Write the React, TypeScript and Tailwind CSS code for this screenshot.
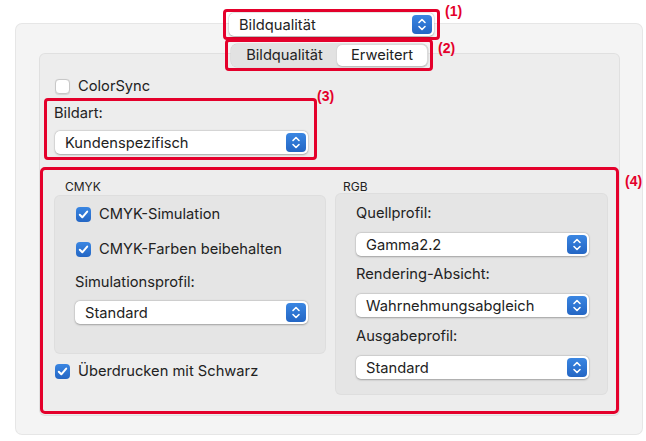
import React from "react";

const RED = "border-[#e4002b]";

function Stepper() {
  return (
    <div className="w-[20px] h-[19px] rounded-[4px] bg-gradient-to-b from-[#3a86e2] to-[#2466c4] flex items-center justify-center shrink-0">
      <svg width="20" height="19" viewBox="0 0 20 19">
        <path d="M7 7.5 L10 4.5 L13 7.5" fill="none" stroke="white" strokeWidth="1.6" strokeLinecap="round" strokeLinejoin="round" />
        <path d="M7 11.5 L10 14.5 L13 11.5" fill="none" stroke="white" strokeWidth="1.6" strokeLinecap="round" strokeLinejoin="round" />
      </svg>
    </div>
  );
}

function Popup({ label, w }: { label: string; w: string }) {
  return (
    <div className={`${w} h-[23px] bg-white rounded-[5px] shadow-[0_0.5px_2px_rgba(0,0,0,0.28),0_0_0_0.5px_rgba(0,0,0,0.06)] flex items-center justify-between pl-[10px] pr-[2px]`}>
      <span className="leading-[20px]">{label}</span>
      <Stepper />
    </div>
  );
}

function Check({ checked }: { checked: boolean }) {
  if (checked) {
    return (
      <div className="w-[15px] h-[15px] rounded-[4px] bg-gradient-to-b from-[#3a86e2] to-[#2466c4] flex items-center justify-center shrink-0">
        <svg width="15" height="15" viewBox="0 0 15 15">
          <path d="M3.8 7.8 L6.3 10.3 L11.2 4.6" fill="none" stroke="white" strokeWidth="2" strokeLinecap="round" strokeLinejoin="round" />
        </svg>
      </div>
    );
  }
  return <div className="w-[15px] h-[15px] rounded-[4px] bg-white border border-[#c8c8c8] shadow-[0_0.5px_1px_rgba(0,0,0,0.1)] shrink-0" />;
}

function CheckRow({ checked, label, className = "" }: { checked: boolean; label: string; className?: string }) {
  return (
    <div className={`flex items-center h-[20px] gap-[8px] ${className}`}>
      <Check checked={checked} />
      <span className="leading-[20px]">{label}</span>
    </div>
  );
}

function Tag({ text, className }: { text: string; className: string }) {
  return (
    <span className={`absolute font-['Liberation_Sans',Arial,sans-serif] font-bold text-[14px] leading-[16px] text-[#e4002b] ${className}`}>{text}</span>
  );
}

export default function App() {
  return (
    <div className="relative w-[646px] h-[441px] bg-white font-['Inter',sans-serif] text-[14.7px] text-[#222222] overflow-hidden">
      <div className="pt-[24px] pl-[16px]">
        <div className="w-[626px] h-[410px] bg-[#f4f4f4] rounded-[6px] shadow-[0_0_0_1px_#e6e6e6] pt-[30px] pl-[24px]">
          <div className="w-[579px] h-[361px] bg-[#ededed] rounded-[5px] shadow-[0_0_0_1px_#e0e0e0] flex flex-col">
            <CheckRow checked={false} label="ColorSync" className="mt-[22px] ml-[15px]" />
            <div className={`ml-[4px] mt-[2px] w-[273px] h-[62px] border-[3px] ${RED} rounded-[4px] pl-[7px] pt-[2px]`}>
              <div className="leading-[20px]">Bildart:</div>
              <div className="mt-[8px] ml-[1px]">
                <Popup label="Kundenspezifisch" w="w-[253px]" />
              </div>
            </div>
            <div className={`mt-auto mb-[1px] w-[579px] h-[247px] border-[3px] ${RED} rounded-[5px] flex pt-[9px] pl-[12px]`}>
              <div className="w-[270px] flex flex-col">
                <div className="pl-[10px] text-[12px] leading-[16px] mb-[1px]">CMYK</div>
                <div className="h-[157px] bg-[#e5e5e5] rounded-[5px] shadow-[0_0_0_1px_#dedede] pt-[8px] pl-[21px]">
                  <CheckRow checked label="CMYK-Simulation" />
                  <CheckRow checked label="CMYK-Farben beibehalten" className="mt-[15px]" />
                  <div className="mt-[13px] -ml-[1px] leading-[20px]">Simulationsprofil:</div>
                  <div className="mt-[9px] -ml-[1px]">
                    <Popup label="Standard" w="w-[233px]" />
                  </div>
                </div>
                <CheckRow checked label="Überdrucken mit Schwarz" className="mt-[8px]" />
              </div>
              <div className="ml-[11px] w-[271px] flex flex-col">
                <div className="pl-[7px] text-[12px] leading-[16px] -mb-[1px]">RGB</div>
                <div className="h-[200px] bg-[#e5e5e5] rounded-[5px] shadow-[0_0_0_1px_#dedede] pt-[9px] pl-[20px]">
                  <div className="leading-[20px]">Quellprofil:</div>
                  <div className="mt-[10px]">
                    <Popup label="Gamma2.2" w="w-[233px]" />
                  </div>
                  <div className="mt-[8px] leading-[20px]">Rendering-Absicht:</div>
                  <div className="mt-[10px]">
                    <Popup label="Wahrnehmungsabgleich" w="w-[233px]" />
                  </div>
                  <div className="mt-[9px] leading-[20px]">Ausgabeprofil:</div>
                  <div className="mt-[10px]">
                    <Popup label="Standard" w="w-[233px]" />
                  </div>
                </div>
              </div>
            </div>
          </div>
        </div>
      </div>

      {/* header controls overlaying panel edges */}
      <div className="absolute left-[223px] top-[9px] flex flex-col items-start">
        <div className={`w-[217px] h-[31px] border-[3px] ${RED} rounded-[4px] pl-[3px] flex items-center`}>
          <Popup label="Bildqualität" w="w-[205px]" />
        </div>
        <div className={`ml-[2px] -mt-[1px] w-[208px] h-[32px] border-[3px] ${RED} rounded-[4px] flex items-center pl-[3px]`}>
          <div className="w-[197px] h-[23px] rounded-[6px] bg-[#e2e2e2] shadow-[0_0_0_0.5px_#d2d2d2] flex items-center p-[1px]">
            <div className="w-[105px] text-center leading-[20px]">Bildqualität</div>
            <div className="flex-1 h-[21px] bg-white rounded-[5px] shadow-[0_0.5px_1.5px_rgba(0,0,0,0.2)] text-center leading-[21px]">Erweitert</div>
          </div>
        </div>
      </div>

      <Tag text="(1)" className="left-[445px] top-[3px]" />
      <Tag text="(2)" className="left-[438px] top-[40px]" />
      <Tag text="(3)" className="left-[317px] top-[88px]" />
      <Tag text="(4)" className="left-[625px] top-[173px]" />
    </div>
  );
}
